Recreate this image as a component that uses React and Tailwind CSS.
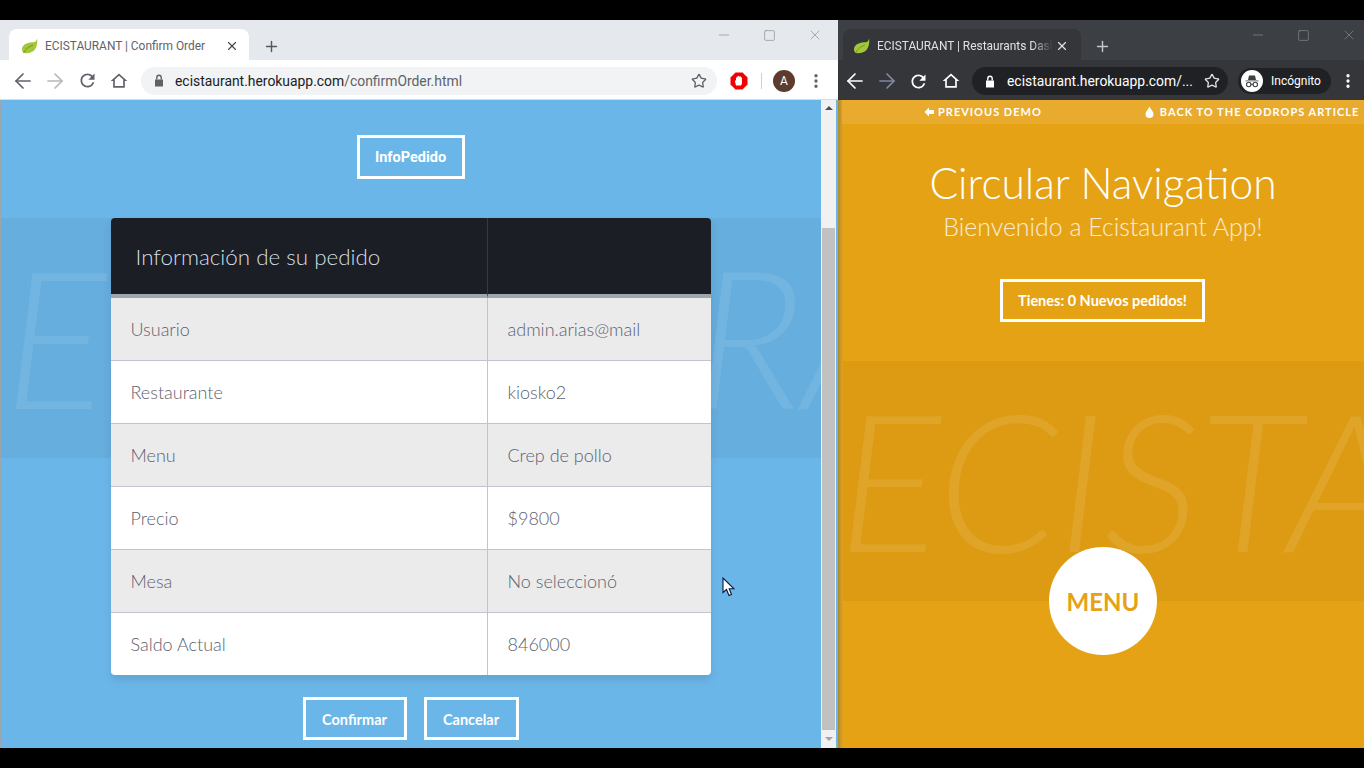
import { ArrowLeft, ArrowRight, Star, Plus, X, Minus, Square, EllipsisVertical } from "lucide-react";

const rows = [
  ["Usuario", "admin.arias@mail"],
  ["Restaurante", "kiosko2"],
  ["Menu", "Crep de pollo"],
  ["Precio", "$9800"],
  ["Mesa", "No seleccionó"],
  ["Saldo Actual", "846000"],
];

const lato = "font-['Lato','Liberation_Sans',sans-serif]";

function Leaf() {
  return (
    <svg width="17" height="16" viewBox="0 0 17 16" className="shrink-0">
      <path d="M16 0.5C15.6 3 14.8 3.6 13 4.2C8 4.2 1 5.5 1 11.5C1 13.2 2 14.6 3 15C8 16 15 14 16 6C16.4 4 16.4 2 16 0.5Z" fill="#a4c639" />
      <path d="M2.5 15C5 10.5 8 8.5 12 7" stroke="#6f9a2a" strokeWidth="1" fill="none" />
    </svg>
  );
}

function ReloadIcon({ className }) {
  return (
    <svg width="21" height="21" viewBox="0 0 24 24" fill="currentColor" className={className}>
      <path d="M17.65 6.35A7.958 7.958 0 0 0 12 4c-4.42 0-7.99 3.58-7.99 8s3.57 8 7.99 8c3.73 0 6.84-2.55 7.73-6h-2.08A5.99 5.99 0 0 1 12 18c-3.31 0-6-2.69-6-6s2.69-6 6-6c1.66 0 3.14.69 4.22 1.78L13 11h7V4l-2.35 2.35z" />
    </svg>
  );
}

function HomeIcon({ className }) {
  return (
    <svg width="20" height="20" viewBox="0 0 24 24" fill="currentColor" fillRule="evenodd" className={className}>
      <path d="M12 3L2 12h3v8h14v-8h3zM12 5.7l5 4.5V18H7v-7.8z" />
    </svg>
  );
}

function LockIcon({ className }) {
  return (
    <svg width="10" height="13" viewBox="0 0 10 13" className={className}>
      <path d="M1 5.5H9V12.5H1Z" fill="currentColor" />
      <path d="M2.8 5.5V3.4A2.2 2.2 0 0 1 7.2 3.4V5.5" fill="none" stroke="currentColor" strokeWidth="1.4" />
    </svg>
  );
}

function StopIcon() {
  return (
    <svg width="18" height="18" viewBox="0 0 18 18">
      <polygon points="5.5,0.5 12.5,0.5 17.5,5.5 17.5,12.5 12.5,17.5 5.5,17.5 0.5,12.5 0.5,5.5" fill="#f00000" />
      <path d="M6 13.5L5 9.5V8.5L6 8.5V5.5H7V4.5H8V4H9V4.5H10V4.5H11V5.5H12V11.5L11 13.5Z" fill="#fff" />
    </svg>
  );
}

function IncognitoIcon() {
  return (
    <svg width="22" height="22" viewBox="0 0 22 22">
      <circle cx="11" cy="11" r="11" fill="#fff" />
      <path d="M4.5 10.5H17.5V11.3H4.5ZM7 10L8 5.5H14L15 10Z" fill="#3c4043" />
      <circle cx="7.7" cy="14.5" r="2.2" fill="none" stroke="#3c4043" strokeWidth="1.1" />
      <circle cx="14.3" cy="14.5" r="2.2" fill="none" stroke="#3c4043" strokeWidth="1.1" />
      <path d="M9.9 14.3H12.1" stroke="#3c4043" strokeWidth="1" />
    </svg>
  );
}

function Cursor() {
  return (
    <svg width="13" height="20" viewBox="0 0 13 20">
      <path d="M1 1V15.5L4.5 12.5L7 18.5L9.5 17.5L7.2 11.8H12Z" fill="#fff" stroke="#0b1a3a" strokeWidth="1.1" />
    </svg>
  );
}

function OutlineButton({ className, children }) {
  return (
    <div className={"flex items-center justify-center border-[3px] border-white text-white font-bold text-[14.5px] " + className}>
      {children}
    </div>
  );
}

function Watermark({ className }) {
  return (
    <div className={"absolute inset-0 overflow-hidden whitespace-nowrap italic font-light text-[192px] leading-[234px] tracking-[-1px] text-white/[0.09] " + lato + " " + className}>
      ECISTAURANT
    </div>
  );
}

function LeftWindow() {
  return (
    <div className="w-[838px] h-full flex flex-col shrink-0 font-['Roboto',sans-serif]">
      <div className="h-[40px] bg-[#e5e9ed] flex items-end pl-[9px] relative shrink-0">
        <div className="w-[240px] h-[31px] bg-white rounded-t-lg flex items-center pl-[12px] pr-[10px] pt-[2px]">
          <Leaf />
          <span className="ml-[7px] pt-[2px] text-[11.9px] text-[#5f6368] flex-1 whitespace-nowrap">ECISTAURANT | Confirm Order</span>
          <X size={14} strokeWidth={2} className="text-[#45484d]" />
        </div>
        <Plus size={17} strokeWidth={2} className="text-[#55585d] ml-[14px] mb-[5px]" />
        <div className="absolute right-0 top-0 flex items-center gap-[31px] pt-[7px] pr-[15px] text-[#7f8b9c]">
          <Minus size={16} strokeWidth={1} />
          <Square size={13} strokeWidth={1.2} />
          <X size={16} strokeWidth={1} />
        </div>
      </div>
      <div className="h-[40px] bg-white flex items-center pl-[11px] pr-[12px] pt-[2px] shrink-0 border-b border-[#dcdcdc]">
        <ArrowLeft size={24} strokeWidth={1.7} className="text-[#5f6368]" />
        <ArrowRight size={24} strokeWidth={1.7} className="text-[#b6b8bb] ml-[8px]" />
        <ReloadIcon className="text-[#5f6368] ml-[10px]" />
        <HomeIcon className="text-[#5f6368] ml-[11px]" />
        <div className="ml-[12px] w-[576px] h-[28px] rounded-full bg-[#f1f3f4] flex items-center pl-[13px] pr-[10px]">
          <LockIcon className="text-[#5f6368]" />
          <span className="ml-[11px] pt-[2px] text-[13.9px] text-[#202124] flex-1 whitespace-nowrap">
            ecistaurant.herokuapp.com<span className="text-[#5f6368]">/confirmOrder.html</span>
          </span>
          <Star size={16} strokeWidth={2} className="text-[#5f6368]" />
        </div>
        <div className="ml-[13px]"><StopIcon /></div>
        <div className="ml-[13px] w-px h-[16px] bg-[#d0d0d0]" />
        <div className="ml-[11px] w-[22px] h-[22px] rounded-full bg-[#5d3b2e] text-white text-xs flex items-center justify-center">A</div>
        <EllipsisVertical size={18} strokeWidth={2.4} className="text-[#5f6368] ml-[12px]" />
      </div>
      <div className="flex-1 flex min-h-0">
        <div className={"w-[821px] bg-[#6bb6e9] relative overflow-hidden flex flex-col items-center pt-[35px] border-l border-[#9aa5ad] " + lato}>
          <div className="absolute left-0 right-0 top-[118px] h-[240px] bg-[#66aede]">
            <Watermark className="pl-[3px]" />
          </div>
          <OutlineButton className="relative w-[108px] h-[44px] pt-[1px] font-['Roboto',sans-serif] -ml-px">InfoPedido</OutlineButton>
          <table className="relative mt-[39px] -ml-px w-[600px] border-separate border-spacing-0 table-fixed rounded overflow-hidden shadow-[0_5px_10px_rgba(0,0,0,0.1)]">
            <thead>
              <tr className="bg-[#1b1e24]">
                <th className="w-[377px] h-[80px] pl-[25px] pt-[2px] text-left font-light text-[22.4px] text-[#d5dde5] border-r border-b-4 border-r-[#343a45] border-b-[#9ea7af]">Información de su pedido</th>
                <th className="h-[80px] border-b-4 border-b-[#9ea7af]" />
              </tr>
            </thead>
            <tbody>
              {rows.map((r, i) => {
                const bottom = i === rows.length - 1 ? "h-[62px]" : "h-[63px] border-b border-b-[#c1c3d1]";
                return (
                  <tr key={r[0]} className={"text-[18px] font-light text-[#5c6270] " + (i % 2 === 0 ? "bg-[#ebebeb]" : "bg-white")}>
                    <td className={"pl-[20px] border-r border-r-[#c1c3d1] " + bottom}>{r[0]}</td>
                    <td className={"pl-[20px] " + bottom}>{r[1]}</td>
                  </tr>
                );
              })}
            </tbody>
          </table>
          <div className="relative flex gap-[17px] mt-[22px] -ml-px">
            <OutlineButton className="w-[104px] h-[43px] pt-[2px]">Confirmar</OutlineButton>
            <OutlineButton className="w-[95px] h-[43px] pt-[2px]">Cancelar</OutlineButton>
          </div>
          <div className="absolute left-[721px] top-[477px]"><Cursor /></div>
        </div>
        <div className="w-[15px] bg-[#f1f1f1] flex flex-col items-center">
          <div className="h-[16px] flex items-center justify-center">
            <div className="w-0 h-0 border-x-[4px] border-x-transparent border-b-[4px] border-b-[#505050]" />
          </div>
          <div className="mt-[112px] w-[13px] h-[502px] bg-[#c1c1c1]" />
          <div className="flex-1 flex items-center justify-center">
            <div className="w-0 h-0 border-x-[4px] border-x-transparent border-t-[4px] border-t-[#a3a3a3]" />
          </div>
        </div>
        <div className="w-[2px] bg-[#6bb6e9]" />
      </div>
    </div>
  );
}

function RightWindow() {
  return (
    <div className="flex-1 h-full flex flex-col min-w-0 font-['Roboto',sans-serif]">
      <div className="h-[40px] bg-[#3c3f43] flex items-end pl-[5px] relative shrink-0">
        <div className="w-[238px] h-[31px] bg-[#35363a] rounded-t-lg flex items-center pl-[10px] pr-[10px] pt-[2px]">
          <Leaf />
          <span className="ml-[7px] pt-[2px] text-[11.9px] text-[#dee1e6] w-[176px] overflow-hidden whitespace-nowrap [mask-image:linear-gradient(to_right,black_88%,transparent)]">ECISTAURANT | Restaurants Dashboard</span>
          <X size={14} strokeWidth={2} className="text-[#dee1e6] ml-[2px]" />
        </div>
        <Plus size={17} strokeWidth={2} className="text-[#c5c8cc] ml-[13px] mb-[5px]" />
        <div className="absolute right-0 top-0 flex items-center gap-[31px] pt-[7px] pr-[7px] text-[#8d9096]">
          <Minus size={16} strokeWidth={1} />
          <Square size={13} strokeWidth={1.2} />
          <X size={16} strokeWidth={1} />
        </div>
      </div>
      <div className="h-[40px] bg-[#35363a] flex items-center pl-[5px] pt-[2px] shrink-0">
        <ArrowLeft size={24} strokeWidth={1.7} className="text-white" />
        <ArrowRight size={24} strokeWidth={1.7} className="text-[#7f8aa0] ml-[8px]" />
        <ReloadIcon className="text-white ml-[9px]" />
        <HomeIcon className="text-white ml-[12px]" />
        <div className="ml-[11px] w-[256px] h-[28px] rounded-full bg-[#202124] flex items-center pl-[13px] pr-[8px]">
          <LockIcon className="text-white" />
          <span className="ml-[12px] text-[13.9px] text-white flex-1 whitespace-nowrap">ecistaurant.herokuapp.com/...</span>
          <Star size={16} strokeWidth={2} className="text-[#dee1e6]" />
        </div>
        <div className="ml-[10px] w-[93px] h-[26px] rounded-full bg-[#202124] flex items-center pl-[3px]">
          <IncognitoIcon />
          <span className="ml-[8px] text-xs text-white">Incógnito</span>
        </div>
        <EllipsisVertical size={18} strokeWidth={2.4} className="text-white ml-[8px]" />
      </div>
      <div className={"flex-1 bg-[#e5a215] relative overflow-hidden flex flex-col items-center pl-[4px] text-white " + lato}>
        <div className="absolute left-0 right-0 top-[261px] h-[240px] bg-[#dc9b13]">
          <Watermark className="" />
        </div>
        <div className="absolute left-0 top-0 bottom-0 w-[5px] bg-gradient-to-r from-[#b08a30] to-[#e5a215]" />
        <div className="relative self-stretch h-[24px] bg-[#e9ab2e] flex items-center pl-[82px] gap-[103px] whitespace-nowrap text-[11px] font-bold tracking-[1px] shrink-0">
          <span className="flex items-center gap-[4px]">
            <svg width="10" height="10" viewBox="0 0 10 10"><path d="M5 0.5L0.5 5L5 9.5V7H10V3H5Z" fill="#fff" /></svg>
            PREVIOUS DEMO
          </span>
          <span className="flex items-center gap-[6px]">
            <svg width="9" height="12" viewBox="0 0 9 12"><path d="M4.5 0.5C5.5 3 8.5 5.5 8.5 8A4 4 0 0 1 0.5 8C0.5 5.5 3.5 3 4.5 0.5Z" fill="#fff" /></svg>
            BACK TO THE CODROPS ARTICLE
          </span>
        </div>
        <h1 className="relative mt-[30px] text-[42.5px] leading-[58px] font-light">Circular Navigation</h1>
        <p className="relative -mt-[1px] text-[24.9px] leading-[30px] font-light text-white/80">Bienvenido a Ecistaurant App!</p>
        <OutlineButton className="relative mt-[38px] w-[205px] h-[43px] pt-[1px] -ml-px">Tienes: 0 Nuevos pedidos!</OutlineButton>
        <div className="relative mt-[225px] pt-[2px] w-[108px] h-[108px] rounded-full bg-white flex items-center justify-center text-[#e5a215] font-bold text-[24px]">MENU</div>
      </div>
    </div>
  );
}

export default function App() {
  return (
    <div className="w-[1364px] h-[768px] bg-black py-[20px] overflow-hidden">
      <div className="h-[728px] flex">
        <LeftWindow />
        <RightWindow />
      </div>
    </div>
  );
}
